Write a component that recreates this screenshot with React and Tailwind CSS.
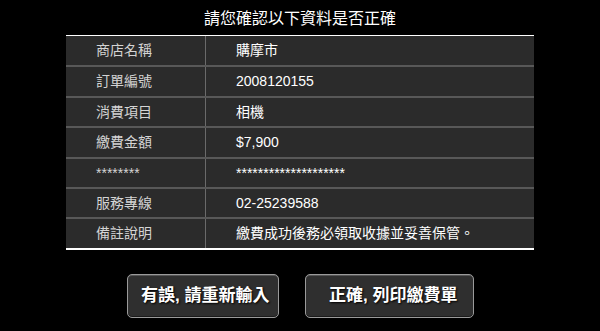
import React from "react";

const rows = [
  { label: "商店名稱", value: "購摩市", h: "h-[31px]" },
  { label: "訂單編號", value: "2008120155", h: "h-[31px]" },
  { label: "消費項目", value: "相機", h: "h-[30px]" },
  { label: "繳費金額", value: "$7,900", h: "h-[31px]" },
  { label: "********", value: "********************", h: "h-[30px]" },
  { label: "服務專線", value: "02-25239588", h: "h-[30px]" },
  { label: "備註說明", value: "繳費成功後務必領取收據並妥善保管。", h: "h-[29px]" },
];

export default function App() {
  const font = { fontFamily: '"Liberation Sans", "Noto Sans CJK TC", sans-serif' };
  return (
    <div className="w-[600px] h-[331px] bg-black flex flex-col items-center" style={font}>
      <div className="h-[35px] w-full flex items-center justify-center pt-[3px] text-[16px] text-white">
        請您確認以下資料是否正確
      </div>
      <div className="w-[468px] bg-[#2b2b2b] border-t border-white border-b-2 border-b-white flex flex-col">
        {rows.map((r, i) => (
          <div
            key={i}
            className={`flex ${r.h} ${i < rows.length - 1 ? "border-b-2 border-[#585858]" : ""}`}
          >
            <div className="w-[140px] border-r border-[#6a6a6a] pl-[30px] flex items-center text-[14px] text-[#d4d4d4]">
              {r.label}
            </div>
            <div className="flex-1 pl-[30px] flex items-center text-[14px] text-white">
              {r.value}
            </div>
          </div>
        ))}
      </div>
      <div className="flex gap-[26px] mt-[24px] ml-[1px]">
        <button className="w-[152px] h-[44px] rounded-[5px] border border-[#9a9a9a] bg-[#2f2f2f] shadow-[inset_0_1px_0_#555,inset_0_-1px_0_#1a1a1a] flex items-center pl-[13px] text-[17px] font-bold text-white [text-shadow:1px_1px_2px_#000]">
          有誤, 請重新輸入
        </button>
        <button className="w-[169px] h-[44px] rounded-[5px] border border-[#9a9a9a] bg-[#2f2f2f] shadow-[inset_0_1px_0_#555,inset_0_-1px_0_#1a1a1a] flex items-center pl-[23px] text-[17px] font-bold text-white [text-shadow:1px_1px_2px_#000]">
          正確, 列印繳費單
        </button>
      </div>
    </div>
  );
}
